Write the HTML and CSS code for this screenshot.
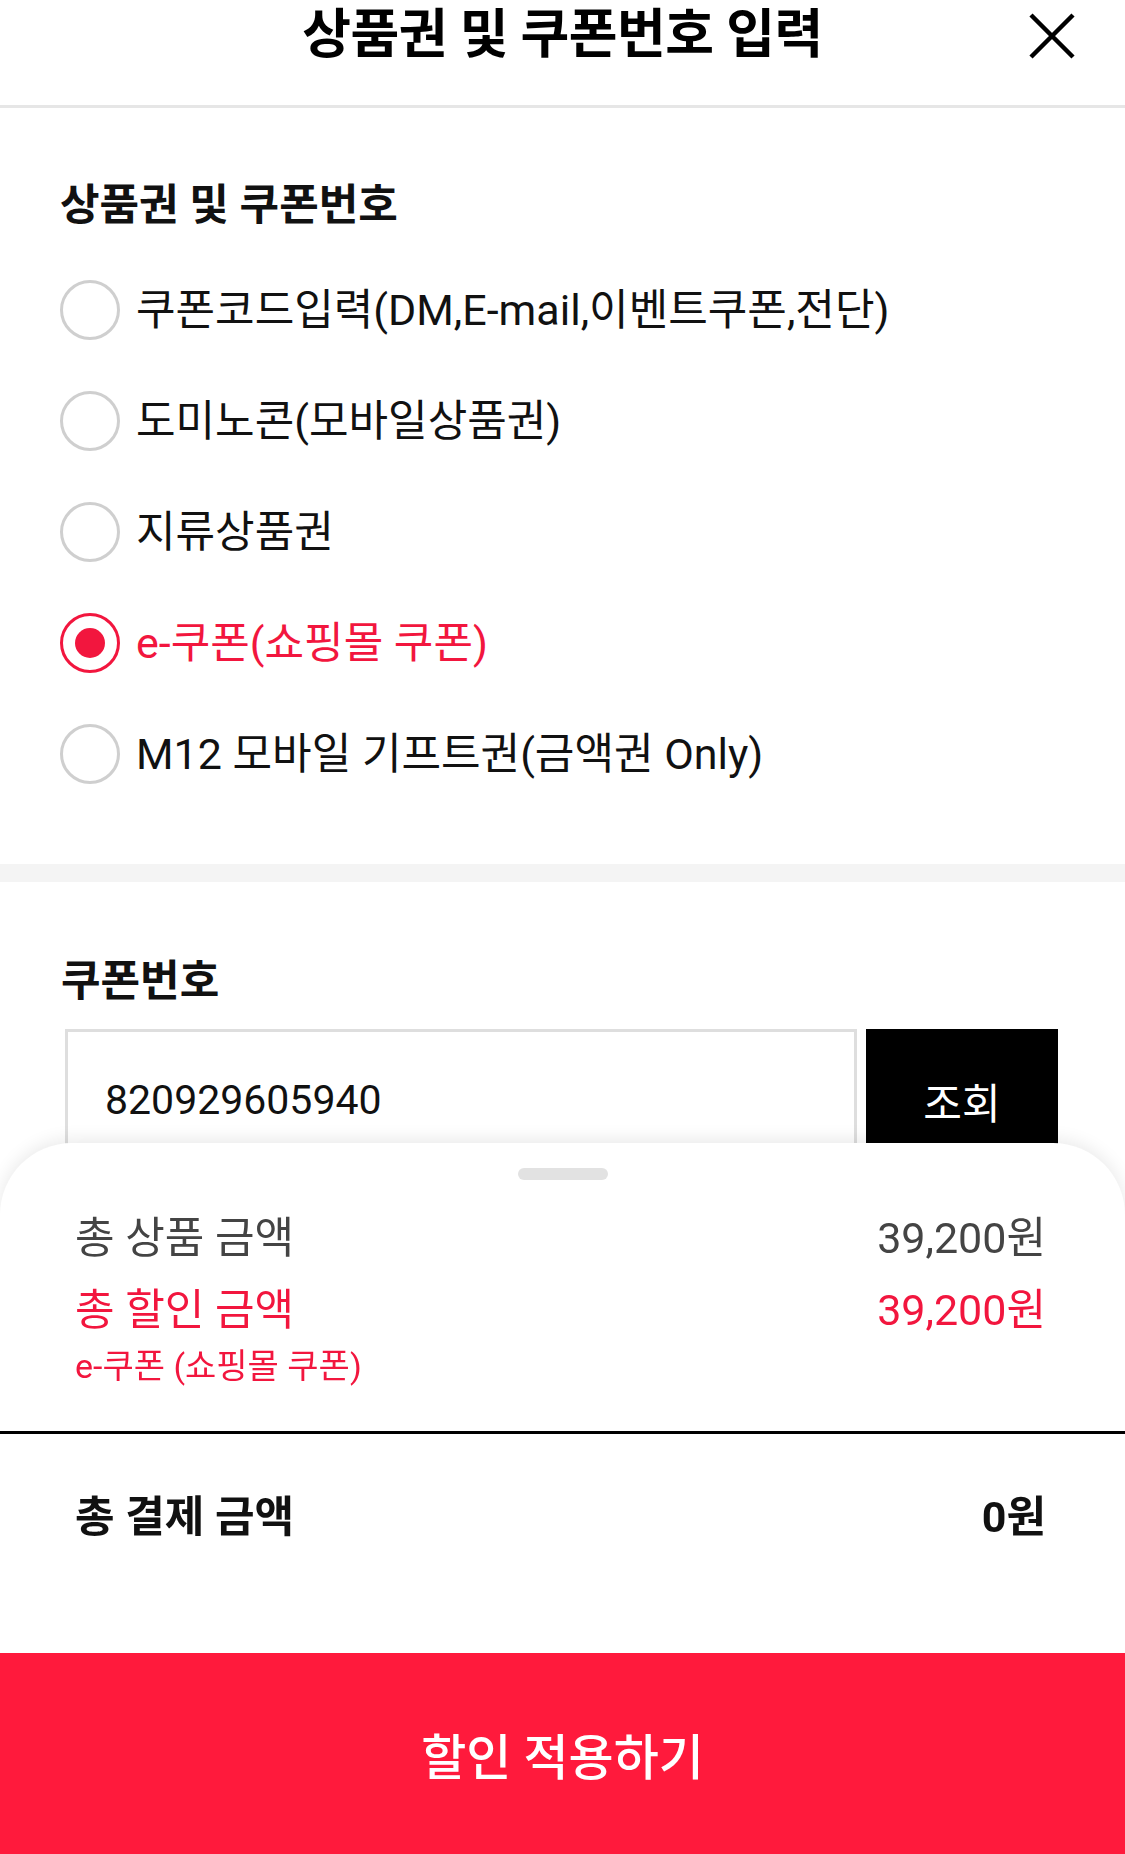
FILE: index.html
```html
<!DOCTYPE html>
<html lang="ko">
<head>
<meta charset="utf-8">
<title>상품권 및 쿠폰번호 입력</title>
<link rel="stylesheet" href="styles.css">
</head>
<body>
<div class="page">
  <header class="header">
    <div></div>
    <h1 class="title">상품권 및 쿠폰번호 입력</h1>
    <button class="close" aria-label="닫기">
      <svg width="48" height="48" viewBox="0 0 48 48"><path d="M3 3 L45 45 M45 3 L3 45" stroke="#000" stroke-width="4.5" stroke-linecap="butt" fill="none"/></svg>
    </button>
  </header>

  <section class="types">
    <h2 class="sec-title">상품권 및 쿠폰번호</h2>
    <ul class="radio-list">
      <li class="radio-row"><span class="radio"></span><span class="label">쿠폰코드입력(DM,E-mail,이벤트쿠폰,전단)</span></li>
      <li class="radio-row"><span class="radio"></span><span class="label">도미노콘(모바일상품권)</span></li>
      <li class="radio-row"><span class="radio"></span><span class="label">지류상품권</span></li>
      <li class="radio-row selected"><span class="radio"></span><span class="label">e-쿠폰(쇼핑몰 쿠폰)</span></li>
      <li class="radio-row"><span class="radio"></span><span class="label">M12 모바일 기프트권(금액권 Only)</span></li>
    </ul>
  </section>

  <div class="band"></div>

  <section class="coupon">
    <h2 class="sec-title">쿠폰번호</h2>
    <div class="input-row">
      <div class="input">820929605940</div>
      <button class="search">조회</button>
    </div>
  </section>
</div>

<div class="sheet">
  <div class="handle"></div>
  <div class="summary">
    <div class="sum-row gray"><span>총 상품 금액</span><span class="num">39,200원</span></div>
    <div class="sum-row red"><span>총 할인 금액</span><span class="num">39,200원</span></div>
    <div class="sub red">e-쿠폰 (쇼핑몰 쿠폰)</div>
  </div>
  <div class="total">
    <span>총 결제 금액</span><span class="num">0원</span>
  </div>
  <button class="apply">할인 적용하기</button>
</div>
</body>
</html>
```

FILE: styles.css
```css
* { box-sizing: border-box; }
html, body { margin: 0; padding: 0; }
body {
  width: 1125px;
  height: 1854px;
  overflow: hidden;
  background: #fff;
  color: #111;
  font-family: Roboto, "Noto Sans CJK KR", sans-serif;
}
button { font-family: inherit; border: 0; background: none; padding: 0; margin: 0; cursor: pointer; }
h1, h2, ul { margin: 0; padding: 0; }
ul { list-style: none; }

.header {
  display: grid;
  grid-template-columns: 1fr auto 1fr;
  align-items: start;
  height: 108px;
  border-bottom: 3px solid #e6e6e6;
}
.title {
  font-size: 53px;
  font-weight: 700;
  line-height: 70px;
  color: #000;
  letter-spacing: -0.5px;
}
.close {
  justify-self: end;
  margin-top: 12px;
  margin-right: 49px;
  width: 48px;
  height: 48px;
  display: flex;
}

.types { padding: 67px 0 55px 60px; }
.sec-title {
  font-size: 43px;
  font-weight: 700;
  line-height: 60px;
  color: #111;
}
.radio-list { margin-top: 19px; }
.radio-row {
  height: 111px;
  display: flex;
  align-items: center;
  gap: 16px;
}
.radio {
  width: 60px;
  height: 60px;
  border-radius: 50%;
  border: 3px solid #cfcfcf;
  display: flex;
  align-items: center;
  justify-content: center;
  flex: none;
}
.label {
  font-size: 43px;
  line-height: 52px;
  color: #111;
}
.selected .radio { border-color: #f2163e; }
.selected .radio::after {
  content: "";
  width: 30px;
  height: 30px;
  border-radius: 50%;
  background: #f2163e;
}
.selected .label { color: #f2163e; }

.band { height: 18px; background: #f4f4f4; }

.coupon { padding: 69px 0 0 61px; }
.input-row {
  margin-top: 18px;
  display: flex;
  gap: 9px;
}
.input {
  width: 792px;
  height: 142px;
  border: 3px solid #dedede;
  padding-left: 37px;
  display: flex;
  align-items: center;
  font-size: 41px;
  color: #111;
  margin-left: 4px;
}
.search {
  width: 192px;
  height: 142px;
  background: #000;
  color: #fff;
  font-size: 42px;
}

.sheet {
  position: fixed;
  left: 0;
  right: 0;
  bottom: 0;
  height: 711px;
  background: #fff;
  border-radius: 72px 72px 0 0;
  box-shadow: 0 -3px 18px rgba(0, 0, 0, 0.09);
  display: flex;
  flex-direction: column;
}
.handle {
  width: 90px;
  height: 12px;
  border-radius: 6px;
  background: #e2e2e2;
  margin: 25px auto 0;
}
.summary {
  padding: 33px 79px 45px 75px;
  border-bottom: 3px solid #000;
}
.sum-row {
  display: flex;
  justify-content: space-between;
  font-size: 43px;
  line-height: 50px;
}
.sum-row + .sum-row { margin-top: 22px; }
.gray { color: #444; }
.red { color: #f2163e; }
.sub {
  margin-top: 11px;
  font-size: 34px;
  line-height: 40px;
}
.total {
  flex: 1;
  display: flex;
  justify-content: space-between;
  align-items: flex-start;
  padding: 55px 79px 0 75px;
  font-size: 43px;
  font-weight: 700;
  line-height: 56px;
  color: #111;
}
.apply {
  height: 201px;
  width: 100%;
  background: #ff1a3c;
  color: #fff;
  font-size: 49px;
  font-weight: 500;
  flex: none;
}
```
